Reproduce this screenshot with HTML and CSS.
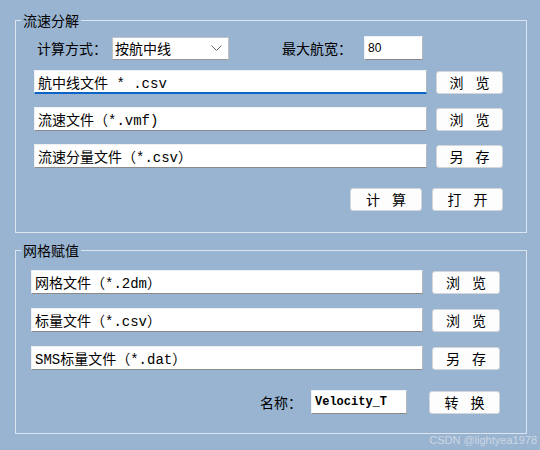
FILE: index.html
```html
<!DOCTYPE html>
<html lang="zh-CN">
<head>
    <meta charset="UTF-8">
    <title>流速分解</title>
    <link rel="stylesheet" href="styles.css">
</head>
<body>
    <div class="window">

        <!-- 流速分解 -->
        <fieldset class="group group-flow">
            <legend>流速分解</legend>
            <div class="group-body">
                <div class="row row-options">
                    <label class="caption caption-mode">计算方式：</label>
                    <div class="combo">
                        <span>按航中线</span>
                        <svg class="chevron" width="11" height="7" viewBox="0 0 11 7"><polyline points="0.5,0.5 5.5,5.5 10.5,0.5" fill="none" stroke="#6d6d6d" stroke-width="1"/></svg>
                    </div>
                    <label class="caption caption-width">最大航宽：</label>
                    <input class="field field-width" type="text" value="80">
                </div>
                <div class="row file-row">
                    <input class="field field-file field-focus" type="text" value="航中线文件 * .csv">
                    <button class="btn btn-file">浏览</button>
                </div>
                <div class="row file-row">
                    <input class="field field-file" type="text" value="流速文件（*.vmf)">
                    <button class="btn btn-file">浏览</button>
                </div>
                <div class="row file-row">
                    <input class="field field-file" type="text" value="流速分量文件（*.csv）">
                    <button class="btn btn-file">另存</button>
                </div>
                <div class="row actions">
                    <button class="btn btn-calc">计算</button>
                    <button class="btn btn-open">打开</button>
                </div>
            </div>
        </fieldset>

        <!-- 网格赋值 -->
        <fieldset class="group group-mesh">
            <legend>网格赋值</legend>
            <div class="group-body">
                <div class="row file-row">
                    <input class="field field-file" type="text" value="网格文件（*.2dm）">
                    <button class="btn btn-file">浏览</button>
                </div>
                <div class="row file-row">
                    <input class="field field-file" type="text" value="标量文件（*.csv）">
                    <button class="btn btn-file">浏览</button>
                </div>
                <div class="row file-row">
                    <input class="field field-file" type="text" value="SMS标量文件（*.dat）">
                    <button class="btn btn-file">另存</button>
                </div>
                <div class="row name-row">
                    <label class="caption caption-name">名称：</label>
                    <input class="field field-name" type="text" value="Velocity_T">
                    <button class="btn btn-convert">转换</button>
                </div>
            </div>
        </fieldset>

        <div class="watermark">CSDN @lightyea1978</div>
    </div>
</body>
</html>
```

FILE: styles.css
```css
body {
    margin: 0;
    background-color: #99b4d1;
    font-family: "Noto Sans CJK SC", sans-serif;
    font-size: 14px;
    color: #000;
}

.window {
    position: relative;
    height: 450px;
    padding-left: 15px;
    box-sizing: border-box;
    overflow: hidden;
}

/* group boxes */
.group {
    width: 512px;
    box-sizing: border-box;
    margin: 0;
    min-width: 0;
    border: 1px solid #dce5ef;
}

.group legend {
    padding: 0 2px;
    font-size: 14px;
    line-height: 16px;
}

.group-flow {
    margin-top: 12px;
    padding: 8px 23px 21px 18px;
}

.group-flow legend {
    margin-left: -13px;
}

.group-mesh {
    margin-top: 9px;
    padding: 12px 26px 19px 15px;
}

.group-mesh legend {
    margin-left: -10px;
}

.group-body {
    display: flex;
    flex-direction: column;
}

.group-flow .group-body {
    gap: 13px;
}

.group-mesh .group-body {
    gap: 14px;
}

.row {
    display: flex;
    align-items: center;
    height: 24px;
}

.row-options {
    margin-bottom: -3px;
}

.actions {
    justify-content: flex-end;
    gap: 10px;
    margin-top: 6px;
}

.name-row {
    justify-content: flex-end;
    margin-top: 6px;
}

/* labels */
.caption {
    line-height: 24px;
    white-space: nowrap;
}

.caption-mode {
    width: 75px;
    margin-left: 3px;
}

.caption-width {
    width: 82px;
    margin-left: 53px;
}

.caption-name {
    margin-right: 9px;
}

/* combo box */
.combo {
    display: flex;
    align-items: center;
    justify-content: space-between;
    width: 117px;
    height: 23px;
    box-sizing: border-box;
    padding: 0 6px 0 2px;
    background: #fff;
    border: 1px solid #c2c2c2;
    border-bottom-color: #9a9a9a;
    line-height: 21px;
}

/* text boxes */
.field {
    height: 24px;
    box-sizing: border-box;
    margin: 0;
    padding: 0 3px;
    background: #fff;
    border: 1px solid #eef0f3;
    border-right-color: #b8b8b8;
    border-bottom-color: #8a8a8a;
    border-radius: 0;
    outline: none;
    font-family: "Liberation Mono", "Noto Sans CJK SC", monospace;
    font-size: 14px;
    color: #000;
}

.field-file {
    flex: 1;
    min-width: 0;
}

.field-focus {
    border-bottom: 2px solid #0a64c8;
}

.field-width {
    width: 59px;
    font-family: "Liberation Sans", sans-serif;
    font-size: 12px;
}

.field-name {
    width: 96px;
    font-size: 12px;
    font-weight: bold;
}

/* buttons */
.btn {
    height: 23px;
    box-sizing: border-box;
    padding: 0;
    background-color: #fdfdfd;
    border: 1px solid #d3d6da;
    border-radius: 3px;
    font-family: "Noto Sans CJK SC", sans-serif;
    font-size: 14px;
    line-height: 21px;
    letter-spacing: 12px;
    text-indent: 12px;
    color: #000;
    cursor: pointer;
}

.btn-file {
    width: 67px;
    margin-left: 9px;
}

.group-mesh .btn-file {
    width: 68px;
}

.btn-calc {
    width: 72px;
}

.btn-open {
    width: 71px;
}

.btn-convert {
    width: 71px;
    margin-left: 22px;
}

.watermark {
    position: absolute;
    right: 3px;
    bottom: 4px;
    font-family: "Liberation Sans", sans-serif;
    font-size: 11px;
    color: #cdd7e3;
}
```
